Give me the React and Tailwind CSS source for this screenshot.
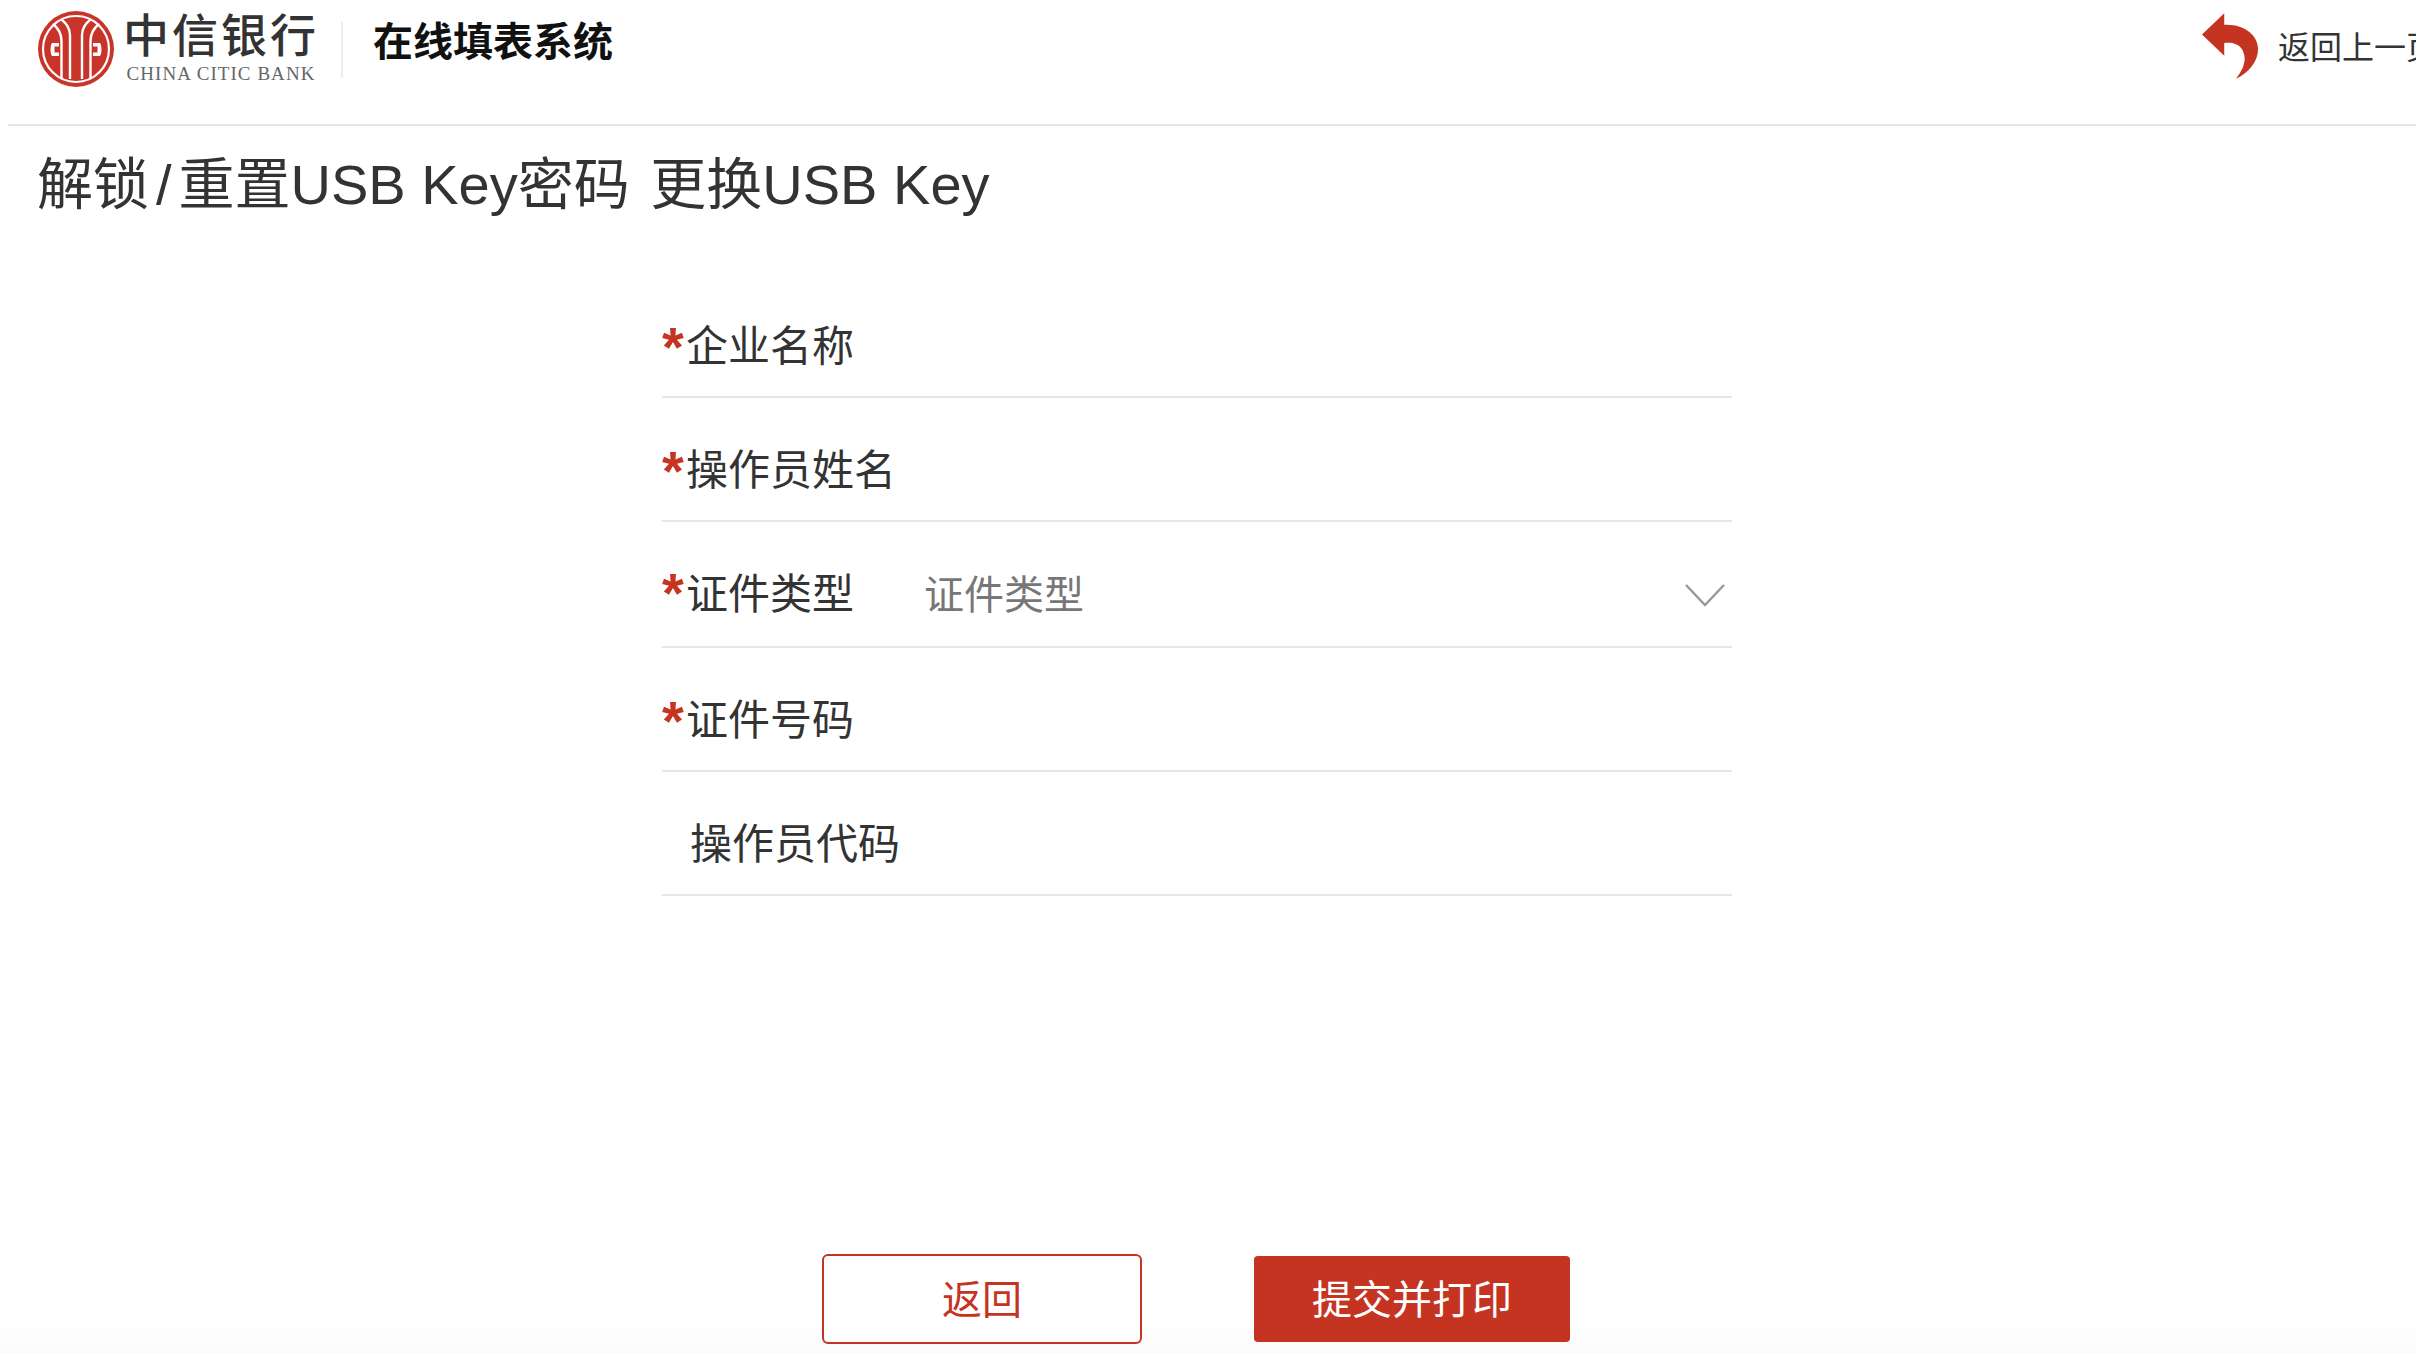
import React from "react";

const CJK = "font-['Liberation_Sans','Noto_Sans_CJK_SC',sans-serif]";

function Logo() {
  return (
    <svg width="76" height="76" viewBox="0 0 76 76" className="shrink-0">
      <circle cx="38" cy="38" r="38" fill="#c9342a" />
      <circle cx="38" cy="38" r="33" fill="none" stroke="#fff" strokeWidth="2.2" />
      <g fill="none" stroke="#fff" strokeWidth="2.4">
        <path d="M32 68 L32 24 C32 17 28 12 23 8" />
        <path d="M44 68 L44 24 C44 17 48 12 53 8" />
        <path d="M23.5 67 L23.5 30 C23.5 23 20 17 15 13" />
        <path d="M52.5 67 L52.5 30 C52.5 23 56 17 61 13" />
      </g>
      <path d="M21 32 L14 32 C12 35 12 42 14 45 L21 45 L21 41.5 L16.5 41.5 L16.5 35.5 L21 35.5 Z" fill="#fff" />
      <path d="M55 32 L62 32 C64 35 64 42 62 45 L55 45 L55 41.5 L59.5 41.5 L59.5 35.5 L55 35.5 Z" fill="#fff" />
    </svg>
  );
}

function Star() {
  return (
    <span className="mt-[21px] w-[24px] self-start text-[56px] leading-[56px] font-bold text-[#c43421] font-['Liberation_Sans',sans-serif]">*</span>
  );
}

function Field({ label, required = true }) {
  return (
    <div className="flex h-[124px] items-center border-b-2 border-[#e6e6e6] pt-[24px]">
      {required ? <Star /> : <span className="w-[28px]" />}
      <span className="shrink-0 text-[42px] leading-[60px] text-[#333]">{label}</span>
    </div>
  );
}

export default function App() {
  return (
    <div className={`h-[1354px] w-[2416px] overflow-hidden bg-[linear-gradient(to_bottom,#ffffff_97%,#fbfbfb_100%)] ${CJK}`}>
      <header className="ml-[8px] flex h-[126px] items-start border-b-2 border-[#e5e5e5]">
        <div className="ml-[30px] mt-[11px] flex">
          <Logo />
          <div className="ml-[9px] flex w-[196px] flex-col items-center">
            <span className="-mt-[2px] whitespace-nowrap text-[46px] leading-[46px] font-medium tracking-[3px] text-[#333] font-['Noto_Sans_CJK_SC',serif]">中信银行</span>
            <span className="mt-[8px] whitespace-nowrap text-[19px] leading-[22px] tracking-[1.05px] text-[#666] font-['Liberation_Serif',serif]">CHINA CITIC BANK</span>
          </div>
        </div>
        <div className="ml-[22px] mt-[22px] h-[56px] w-[2px] bg-[#eeeeee]" />
        <h2 className="ml-[30px] mt-[16px] text-[40px] leading-[52px] font-bold text-[#111]">在线填表系统</h2>
        <div className="ml-auto flex w-[214px] shrink-0 overflow-hidden">
          <svg width="58" height="68" viewBox="0 0 60 70" className="mt-[12px] shrink-0">
            <path d="M0 23 L23 1 L23 13 C44 12 58 24 58 38 C58 51 48 63 35 69 C43 59 46 50 43 42 C40 33 32 31 23 32 L23 45 Z" fill="#c43421" />
          </svg>
          <span className="ml-[18px] mt-[31px] whitespace-nowrap text-[32px] leading-[34px] text-[#333]">返回上一页</span>
        </div>
      </header>

      <h1 className="ml-[37px] mt-[24px] whitespace-nowrap text-[56px] leading-[70px] font-normal text-[#333]">
        解锁<span className="px-[7px]">/</span>重置USB Key密码 <span className="ml-[5px]">更换USB Key</span>
      </h1>

      <form className="ml-[662px] mt-[54px] w-[1070px]">
        <Field label="企业名称" />
        <Field label="操作员姓名" />
        <div className="flex h-[126px] items-center border-b-2 border-[#e6e6e6] pt-[22px]">
          <Star />
          <span className="shrink-0 text-[42px] leading-[60px] text-[#333]">证件类型</span>
          <span className="ml-[70px] text-[40px] leading-[60px] text-[#777]">证件类型</span>
          <svg width="40" height="24" viewBox="0 0 40 24" className="ml-auto mr-[7px]">
            <path d="M1 2 L20 22 L39 2" fill="none" stroke="#999" strokeWidth="2.5" />
          </svg>
        </div>
        <Field label="证件号码" />
        <Field label="操作员代码" required={false} />
      </form>

      <div className="ml-[822px] mt-[358px] flex items-center">
        <button type="button" className="h-[90px] w-[320px] rounded-[6px] border-2 border-[#c43421] bg-white pt-[2px] text-[40px] text-[#c43421]">返回</button>
        <button type="button" className="ml-[112px] h-[86px] w-[316px] rounded-[4px] bg-[#c43421] pt-[2px] text-[40px] text-white">提交并打印</button>
      </div>
    </div>
  );
}
